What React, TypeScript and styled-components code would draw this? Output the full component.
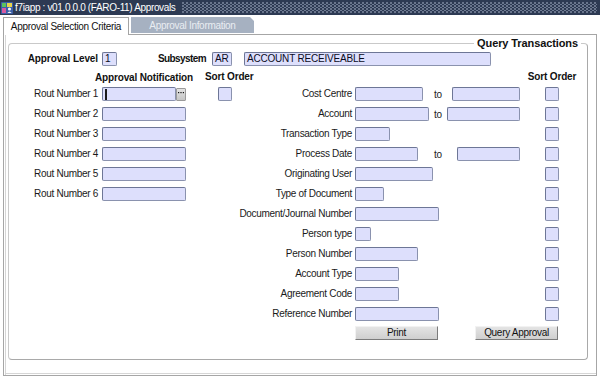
import React from "react";
import styled, { createGlobalStyle } from "styled-components";

const GlobalStyle = createGlobalStyle`
  html, body { margin: 0; padding: 0; background: #ffffff; }
  body { font-family: "Liberation Sans", Arial, sans-serif; }
  *, *::before, *::after { box-sizing: border-box; }
`;

const Window = styled.div`
  width: 600px;
  height: 380px;
  display: flex;
  flex-direction: column;
  background: #ffffff;
  overflow: hidden;
  font-family: "Liberation Sans", Arial, sans-serif;
  color: #111111;
`;

const TitleBar = styled.div`
  flex: 0 0 15px;
  display: flex;
  align-items: center;
  background: #2d3a53;
  padding-left: 1px;
`;

const TitleText = styled.span`
  color: #ffffff;
  font-size: 10px;
  letter-spacing: -0.35px;
  line-height: 15px;
  white-space: nowrap;
  margin-left: 2px;
  margin-right: 6px;
`;

const TitlePattern = styled.div`
  flex: 1;
  height: 11px;
  margin-right: 3px;
  background-image:
    radial-gradient(circle at 1px 1px, #8995ab 0.55px, transparent 1px),
    radial-gradient(circle at 3px 2.5px, #6f7c95 0.55px, transparent 1px);
  background-size: 4px 3px, 4px 3px;
`;

const TabStrip = styled.div`
  flex: 0 0 19px;
  display: flex;
  align-items: flex-end;
  gap: 2px;
  padding-left: 3px;
  position: relative;
  z-index: 1;
`;

const Tab = styled.div<{ $active?: boolean }>`
  height: ${(p) => (p.$active ? 18 : 16)}px;
  width: ${(p) => (p.$active ? 126 : 123)}px;
  margin-bottom: ${(p) => (p.$active ? -1 : 1)}px;
  display: flex;
  align-items: center;
  justify-content: center;
  font-size: 10px;
  letter-spacing: -0.3px;
  white-space: nowrap;
  background: ${(p) => (p.$active ? "#ffffff" : "#a6b1c1")};
  color: ${(p) => (p.$active ? "#111111" : "#e9edf2")};
  border: ${(p) => (p.$active ? "1px solid #a4a4a4" : "none")};
  border-bottom: none;
  clip-path: ${(p) =>
    p.$active ? "none" : "polygon(0 0, calc(100% - 4px) 0, 100% 4px, 100% 100%, 0 100%)"};
  padding-top: ${(p) => (p.$active ? 0 : 1)}px;
`;

const Panel = styled.div`
  flex: 1;
  display: flex;
  flex-direction: column;
  margin: 0 3px 4px 3px;
  padding: 2px 8px 15px 4px;
  border: 1px solid #a6a6a6;
  box-shadow: inset 1px 0 0 #ffffff, inset 2px 0 0 #d6d6d6, inset 0 -1px 0 #ffffff, inset 0 -2px 0 #d6d6d6;
`;

const GroupBox = styled.fieldset`
  flex: 1;
  margin: 0;
  padding: 0;
  min-width: 0;
  border: 1px solid;
  border-color: #c9c9c9 #a9a9a9 #a9a9a9 #c9c9c9;
  border-radius: 4px;
`;

const GroupTitle = styled.legend`
  margin: 0 6px 0 auto;
  padding: 0 3px;
  font-size: 11px;
  font-weight: bold;
  letter-spacing: -0.1px;
  line-height: 13px;
  color: #111111;
`;

const TopRow = styled.div`
  display: flex;
  align-items: center;
  height: 14px;
  margin-top: 2px;
`;

const LabeledPair = styled.div<{ $gap: number; $offset?: number }>`
  display: flex;
  align-items: center;
  gap: ${(p) => p.$gap}px;
  margin-left: ${(p) => p.$offset ?? 0}px;
`;

const BoldLabel = styled.div<{ $w: number; $tight?: boolean }>`
  width: ${(p) => p.$w}px;
  display: flex;
  justify-content: flex-end;
  white-space: nowrap;
  font-size: 10px;
  font-weight: bold;
  letter-spacing: ${(p) => (p.$tight ? -0.6 : -0.1)}px;
  line-height: 14px;
`;

const Body = styled.div`
  display: flex;
  margin-top: 4px;
`;

const LeftGrid = styled.div`
  display: grid;
  grid-template-columns: 89px 99px 40px;
  grid-template-rows: 14px;
  grid-auto-rows: 20px;
  column-gap: 4px;
  align-items: center;
`;

const RightGrid = styled.div`
  display: grid;
  grid-template-columns: 107px 165px 58px;
  grid-template-rows: 14px;
  grid-auto-rows: 20px;
  column-gap: 3px;
  align-items: center;
`;

const Header = styled.div<{ $col: number; $align: "start" | "center"; $w?: number; $drop?: number }>`
  grid-column: ${(p) => p.$col};
  width: ${(p) => (p.$w ? `${p.$w}px` : "auto")};
  display: flex;
  justify-content: ${(p) => (p.$align === "center" ? "center" : "flex-start")};
  white-space: nowrap;
  font-size: 10px;
  font-weight: bold;
  letter-spacing: -0.15px;
  line-height: 14px;
  margin-top: ${(p) => p.$drop ?? 0}px;
`;

const Label = styled.div`
  grid-column: 1;
  display: flex;
  justify-content: flex-end;
  white-space: nowrap;
  font-size: 10px;
  letter-spacing: -0.3px;
  line-height: 14px;
  color: #1a1a1a;
`;

const FieldCell = styled.div`
  display: flex;
  align-items: center;
`;

const Field = styled.div<{ $w: number }>`
  width: ${(p) => p.$w}px;
  height: 14px;
  flex: 0 0 auto;
  display: flex;
  align-items: center;
  padding: 0 2px;
  background: #dddffc;
  border: 1px solid #8a92ae;
  border-top-color: #6d7696;
  border-left-color: #6d7696;
  border-radius: 2px;
  font-size: 10px;
  letter-spacing: -0.2px;
  line-height: 12px;
  color: #0c0c1c;
  white-space: nowrap;
  overflow: hidden;
`;

const Caret = styled.span`
  width: 2px;
  height: 11px;
  background: #1b1b1b;
`;

const LovButton = styled.div`
  width: 10px;
  height: 13px;
  display: flex;
  justify-content: center;
  padding-top: 3px;
  background: linear-gradient(#e2e2e2, #c6c6c6);
  border: 1px solid #9a9a9a;
  border-radius: 1px;
`;

const RangeCell = styled.div`
  display: grid;
  grid-template-columns: 79px auto 1fr;
  align-items: center;
`;

const ToText = styled.span`
  font-size: 10px;
  letter-spacing: -0.3px;
  color: #1a1a1a;
`;

const EndField = styled(Field)`
  justify-self: end;
`;

const SortCell = styled.div`
  display: flex;
  justify-content: center;
`;

const CheckBox = styled.div`
  width: 14px;
  height: 14px;
  background: #dddffc;
  border: 1px solid #8a92ae;
  border-top-color: #6d7696;
  border-left-color: #6d7696;
  border-radius: 2px;
`;

const ButtonRow = styled.div`
  grid-column: 2 / 4;
  align-self: start;
  margin-top: 2px;
  display: flex;
  gap: 37px;
`;

const ActionButton = styled.button`
  width: 83px;
  height: 14px;
  padding: 0;
  font-family: "Liberation Sans", Arial, sans-serif;
  font-size: 10px;
  letter-spacing: -0.3px;
  line-height: 12px;
  color: #111111;
  background: linear-gradient(#e4e4e4, #cfcfcf);
  border: 1px solid;
  border-color: #f2f2f2 #7b7b7b #7b7b7b #f2f2f2;
  border-radius: 0;
`;

const AppIcon = () => (
  <svg width="12" height="12" viewBox="0 0 12 12">
    <rect x="0" y="0" width="12" height="12" rx="1" fill="#3b5fa8" />
    <rect x="1" y="1" width="4" height="4" fill="#5cc35a" />
    <rect x="6" y="1" width="5" height="4" fill="#e8d44a" />
    <rect x="1" y="6" width="4" height="5" fill="#d85aa0" />
    <circle cx="8.5" cy="7" r="1.6" fill="#f3f3f3" />
    <path d="M6.3 11 Q8.5 7.8 10.7 11 Z" fill="#f3f3f3" />
  </svg>
);

const Dots = () => (
  <svg width="6" height="2" viewBox="0 0 6 2">
    <rect x="0" y="0" width="1.2" height="1.2" fill="#111" />
    <rect x="2.4" y="0" width="1.2" height="1.2" fill="#111" />
    <rect x="4.8" y="0" width="1.2" height="1.2" fill="#111" />
  </svg>
);

type QueryRow = { label: string; w: number; to?: number };

const queryRows: QueryRow[] = [
  { label: "Cost Centre", w: 68, to: 68 },
  { label: "Account", w: 74, to: 73 },
  { label: "Transaction Type", w: 35 },
  { label: "Process Date", w: 63, to: 63 },
  { label: "Originating User", w: 78 },
  { label: "Type of Document", w: 29 },
  { label: "Document/Journal Number", w: 84 },
  { label: "Person type", w: 16 },
  { label: "Person Number", w: 63 },
  { label: "Account Type", w: 44 },
  { label: "Agreement Code", w: 44 },
  { label: "Reference Number", w: 84 },
];

const routRows = [1, 2, 3, 4, 5, 6];

export default function App() {
  return (
    <>
      <GlobalStyle />
      <Window>
        <TitleBar>
          <AppIcon />
          <TitleText>f7iapp : v01.0.0.0 (FARO-11) Approvals</TitleText>
          <TitlePattern />
        </TitleBar>
        <TabStrip>
          <Tab $active>Approval Selection Criteria</Tab>
          <Tab>Approval Information</Tab>
        </TabStrip>
        <Panel>
          <GroupBox>
            <GroupTitle>Query Transactions</GroupTitle>
            <TopRow>
              <LabeledPair $gap={4}>
                <BoldLabel $w={89}>Approval Level</BoldLabel>
                <Field $w={15}>1</Field>
              </LabeledPair>
              <LabeledPair $gap={6}>
                <BoldLabel $w={89} $tight>Subsystem</BoldLabel>
                <Field $w={20}>AR</Field>
              </LabeledPair>
              <LabeledPair $gap={0} $offset={12}>
                <Field $w={247}>ACCOUNT RECEIVEABLE</Field>
              </LabeledPair>
            </TopRow>
            <Body>
              <LeftGrid>
                <Header $col={2} $align="center" $w={84} $drop={2}>
                  Approval Notification
                </Header>
                <Header $col={3} $align="start">Sort Order</Header>
                {routRows.map((n) => (
                  <React.Fragment key={n}>
                    <Label>Rout Number {n}</Label>
                    <FieldCell>
                      {n === 1 ? (
                        <>
                          <Field $w={74}>
                            <Caret />
                          </Field>
                          <LovButton>
                            <Dots />
                          </LovButton>
                        </>
                      ) : (
                        <Field $w={84} />
                      )}
                    </FieldCell>
                    <SortCell>{n === 1 ? <CheckBox /> : null}</SortCell>
                  </React.Fragment>
                ))}
              </LeftGrid>
              <RightGrid>
                <Header $col={3} $align="center">Sort Order</Header>
                {queryRows.map((r) => (
                  <React.Fragment key={r.label}>
                    <Label>{r.label}</Label>
                    {r.to ? (
                      <RangeCell>
                        <Field $w={r.w} />
                        <ToText>to</ToText>
                        <EndField $w={r.to} />
                      </RangeCell>
                    ) : (
                      <FieldCell>
                        <Field $w={r.w} />
                      </FieldCell>
                    )}
                    <SortCell>
                      <CheckBox />
                    </SortCell>
                  </React.Fragment>
                ))}
                <ButtonRow>
                  <ActionButton>Print</ActionButton>
                  <ActionButton>Query Approval</ActionButton>
                </ButtonRow>
              </RightGrid>
            </Body>
          </GroupBox>
        </Panel>
      </Window>
    </>
  );
}
